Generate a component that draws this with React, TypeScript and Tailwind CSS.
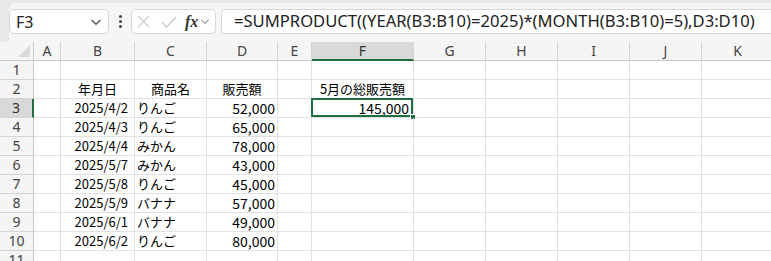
import React from "react";

const COLS = ["A", "B", "C", "D", "E", "F", "G", "H", "I", "J", "K"];

type Row = { date: string; item: string; amount: string };

const rows: Row[] = [
  { date: "2025/4/2", item: "りんご", amount: "52,000" },
  { date: "2025/4/3", item: "りんご", amount: "65,000" },
  { date: "2025/4/4", item: "みかん", amount: "78,000" },
  { date: "2025/5/7", item: "みかん", amount: "43,000" },
  { date: "2025/5/8", item: "りんご", amount: "45,000" },
  { date: "2025/5/9", item: "バナナ", amount: "57,000" },
  { date: "2025/6/1", item: "バナナ", amount: "49,000" },
  { date: "2025/6/2", item: "りんご", amount: "80,000" },
];

const grid =
  "grid grid-cols-[34px_27px_74px_72px_71px_34px_102px_72px_72px_72px_72px_72px]";
const cell =
  "h-[19px] border-r border-b border-[#e1e1e1] px-[2px] text-[13px] leading-[18px] text-black whitespace-nowrap overflow-visible";
const hdr =
  "h-[19px] border-r border-b border-[#d4d4d4] bg-[#f5f5f5] text-center text-[14px] leading-[18px] text-[#444]";

function Chevron({ className }: { className?: string }) {
  return (
    <svg viewBox="0 0 12 8" className={className} fill="none" stroke="currentColor" strokeWidth="1.3">
      <path d="M1.5 2 L6 6.3 L10.5 2" />
    </svg>
  );
}

function FormulaBar() {
  return (
    <div className="h-[42px] bg-[#e9e9e9] pt-[3px]">
      <div className="ml-[9px] flex h-[39px] items-start rounded-tl-[6px] bg-[#f5f5f5] pt-[6px]">
        <div className="flex h-[25px] w-[100px] items-center justify-between rounded-[5px] border border-[#d6d6d6] bg-white pl-[6px] pr-[6px] text-[16px] text-[#222]">
          <span>F3</span>
          <Chevron className="h-[8px] w-[12px] text-[#555]" />
        </div>
        <div className="flex h-[25px] w-[22px] flex-col items-center justify-center gap-[2px]">
          <span className="h-[3px] w-[3px] rounded-full bg-[#444]" />
          <span className="h-[3px] w-[3px] rounded-full bg-[#444]" />
          <span className="h-[3px] w-[3px] rounded-full bg-[#444]" />
        </div>
        <div className="flex h-[25px] w-[85px] items-center rounded-[5px] border border-[#d6d6d6] bg-white pl-[5px]">
          <svg viewBox="0 0 14 14" className="h-[13px] w-[13px]" fill="none" stroke="#c8c8c8" strokeWidth="1.2">
            <path d="M1 1 L13 13 M13 1 L1 13" />
          </svg>
          <svg viewBox="0 0 16 12" className="ml-[11px] h-[12px] w-[16px]" fill="none" stroke="#c8c8c8" strokeWidth="1.2">
            <path d="M1 6 L5.5 11 L15 1" />
          </svg>
          <span className="ml-[8px] font-['Liberation_Serif',serif] text-[16px] font-bold italic leading-none text-[#333]">
            fx
          </span>
          <Chevron className="ml-[2px] h-[7px] w-[10px] text-[#999]" />
        </div>
        <div className="ml-[5px] flex h-[25px] flex-1 items-center rounded-l-[5px] border border-r-0 border-[#d6d6d6] bg-white pl-[12px] text-[16.6px] whitespace-nowrap text-[#222]">
          =SUMPRODUCT((YEAR(B3:B10)=2025)*(MONTH(B3:B10)=5),D3:D10)
        </div>
      </div>
    </div>
  );
}

export default function App() {
  const cjk = "font-['Noto_Sans_CJK_JP',sans-serif]";
  return (
    <div className="h-[261px] w-[771px] overflow-hidden bg-white font-['Noto_Sans','Noto_Sans_CJK_JP',sans-serif]">
      <FormulaBar />
      <div className={grid}>
        {/* column headers */}
        <div className="relative h-[19px] border-r border-b border-[#c8c8c8] bg-[#f5f5f5]">
          <svg viewBox="0 0 12 12" className="absolute right-[3px] bottom-[3px] h-[12px] w-[12px]">
            <path d="M12 0 L12 12 L0 12 Z" fill="#dadada" />
          </svg>
        </div>
        {COLS.map((c) =>
          c === "F" ? (
            <div
              key={c}
              className="h-[19px] border-r border-b-2 border-r-[#d4d4d4] border-b-[#1e6e41] bg-[#d9d9d9] text-center text-[14px] leading-[18px] text-[#333]"
            >
              {c}
            </div>
          ) : (
            <div key={c} className={`${hdr} border-b-[#c8c8c8]`}>
              {c}
            </div>
          )
        )}

        {Array.from({ length: 11 }, (_, i) => i + 1).map((r) => {
          const d = r >= 3 && r <= 10 ? rows[r - 3] : null;
          return (
            <React.Fragment key={r}>
              <div
                className={
                  r === 3
                    ? "h-[19px] border-r-2 border-b border-r-[#1e6e41] border-b-[#d4d4d4] bg-[#d9d9d9] text-center text-[14px] leading-[18px] text-[#333]"
                    : "h-[19px] border-r border-b border-r-[#c8c8c8] border-b-[#d4d4d4] bg-[#f5f5f5] text-center text-[14px] leading-[18px] text-[#444]"
                }
              >
                {r}
              </div>
              {/* A */}
              <div className={cell} />
              {/* B */}
              {r === 2 ? (
                <div className={`${cell} ${cjk} text-center`}>年月日</div>
              ) : (
                <div className={`${cell} ${cjk} pr-[6px] text-right text-[13.6px]`}>{d?.date}</div>
              )}
              {/* C */}
              <div className={`${cell} ${cjk} ${r === 2 ? "text-center" : "text-left"}`}>
                {r === 2 ? "商品名" : d?.item}
              </div>
              {/* D */}
              {r === 2 ? (
                <div className={`${cell} ${cjk} text-center`}>販売額</div>
              ) : (
                <div className={`${cell} ${cjk} text-right text-[14px]`}>{d?.amount}</div>
              )}
              {/* E */}
              <div className={cell} />
              {/* F */}
              <div
                className={`${cell} ${cjk} relative ${r === 2 ? "text-center" : "pr-[4px] text-right text-[14px]"}`}
              >
                {r === 2 ? "5月の総販売額" : r === 3 ? "145,000" : ""}
                {r === 3 && (
                  <>
                    <div className="pointer-events-none absolute -top-[1px] -left-[1px] right-0 bottom-0 border-2 border-[#1e6e41]" />
                    <div className="absolute -right-[3px] -bottom-[3px] h-[6px] w-[6px] border border-white bg-[#1e6e41]" />
                  </>
                )}
              </div>
              {/* G-K */}
              <div className={cell} />
              <div className={cell} />
              <div className={cell} />
              <div className={cell} />
              <div className={cell} />
            </React.Fragment>
          );
        })}
      </div>
    </div>
  );
}
